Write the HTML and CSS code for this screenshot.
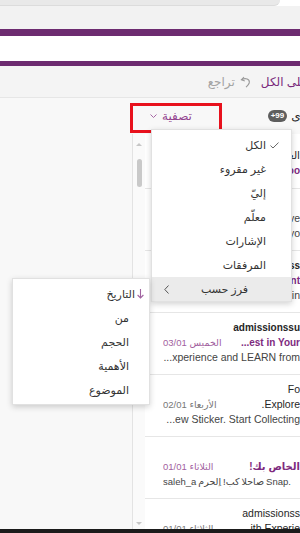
FILE: index.html
```html
<!DOCTYPE html>
<html lang="ar">
<head>
  <meta charset="UTF-8" />
  <meta name="viewport" content="width=device-width, initial-scale=1" />
  <title>البريد الوارد</title>
  <link rel="stylesheet" href="styles.css">
</head>
<body>
  <div class="app">
    <div class="top-edge"><div class="search-edge"></div></div>
    <div class="band"></div>
    <div class="bar bar-thick"></div>
    <div class="blank"></div>
    <div class="bar bar-thin"></div>

    <div class="toolbar" dir="rtl">
      <span class="tool-main">على الكل</span>
      <span class="tool-undo">
        <svg width="11" height="12" viewBox="0 0 11 12"><path d="M4 1 L1.4 3.8 L4.8 5" fill="none" stroke="#999" stroke-width="1.1"/><path d="M1.6 3.8 C5.4 1.4 10.2 3.2 9.2 7 C8.7 8.7 7.5 9.8 6 11.2" fill="none" stroke="#999" stroke-width="1.1"/></svg>
        <span>تراجع</span>
      </span>
    </div>

    <div class="main">
      <div class="folders"></div>
      <div class="pane">
        <div class="list-head" dir="rtl">
          <div class="tab">أخرى <span class="badge" dir="ltr">+99</span></div>
          <div class="filter">تصفية
            <svg width="7" height="4" viewBox="0 0 7 4"><path d="M0.5 0.5 L3.5 3.5 L6.5 0.5" fill="none" stroke="#a767a4" stroke-width="1"/></svg>
          </div>
        </div>
        <div class="list-body">
          <div class="scroll">
            <span class="arrow-up"></span>
            <span class="thumb"></span>
            <span class="arrow-down"></span>
          </div>
          <div class="rows">
            <div class="row first" dir="rtl">
              <div class="line from">العـ</div>
              <div class="line subj unread">poo</div>
            </div>
            <div class="row" dir="rtl">
              <div class="line from">&nbsp;</div>
              <div class="line prev"><span dir="ltr">ctive</span></div>
              <div class="line prev"><span dir="ltr">t yo</span></div>
            </div>
            <div class="row" dir="rtl">
              <div class="line from unread">ss</div>
              <div class="line subj unread"><span dir="ltr">ent</span></div>
              <div class="line prev"><span dir="ltr">in</span></div>
            </div>
            <div class="row" dir="rtl">
              <div class="line from unread">admissionssu</div>
              <div class="line subj unread"><span dir="ltr">...est in Your</span><span class="date">الخميس 03/01</span></div>
              <div class="line prev"><span dir="ltr">...xperience and LEARN from</span></div>
            </div>
            <div class="row" dir="rtl">
              <div class="line from">Fo</div>
              <div class="line subj">Explore.<span class="date">الأربعاء 02/01</span></div>
              <div class="line prev"><span dir="ltr">...ew Sticker. Start Collecting</span></div>
            </div>
            <div class="row" dir="rtl">
              <div class="line from">&nbsp;</div>
              <div class="line subj unread">الخاص بك!<span class="date">الثلاثاء 01/01</span></div>
              <div class="line prev mixed">
                <span class="words" dir="ltr"><span>saleh_a</span><span>اِلحرم</span><span>!كب</span><span>صاحلا</span><span>Snap.</span></span>
              </div>
            </div>
            <div class="row" dir="rtl">
              <div class="line from">admissionss</div>
              <div class="line subj"><span dir="ltr">ith Experie</span><span class="date">الثلاثاء 01/01</span></div>
            </div>
          </div>
        </div>
      </div>
    </div>
    <div class="taskbar"></div>
  </div>

  <div class="annot"></div>

  <div class="menu filter-menu" dir="rtl">
    <div class="item">
      <svg class="mark" width="9" height="7" viewBox="0 0 9 7"><path d="M0.5 3.6 L3 6 L8.5 0.6" fill="none" stroke="#666" stroke-width="1"/></svg>
      <span>الكل</span>
    </div>
    <div class="item"><span class="mark"></span><span>غير مقروء</span></div>
    <div class="item"><span class="mark"></span><span>إليّ</span></div>
    <div class="item"><span class="mark"></span><span>معلّم</span></div>
    <div class="item"><span class="mark"></span><span>الإشارات</span></div>
    <div class="item"><span class="mark"></span><span>المرفقات</span></div>
    <div class="item sub">
      <span>فرز حسب</span>
      <svg width="5" height="9" viewBox="0 0 5 9"><path d="M4.5 0.5 L0.8 4.5 L4.5 8.5" fill="none" stroke="#555" stroke-width="1"/></svg>
    </div>
  </div>

  <div class="menu sort-menu" dir="rtl">
    <div class="sort-item current">
      <svg width="7" height="10" viewBox="0 0 7 10"><path d="M3.5 0 V9 M0.6 6 L3.5 9 L6.4 6" fill="none" stroke="#a063a0" stroke-width="1.1"/></svg>
      <span>التاريخ</span>
    </div>
    <div class="sort-item">من</div>
    <div class="sort-item">الحجم</div>
    <div class="sort-item">الأهمية</div>
    <div class="sort-item">الموضوع</div>
  </div>
</body>
</html>
```

FILE: styles.css
```css
body {
  margin: 0;
  width: 300px;
  height: 533px;
  overflow: hidden;
  position: relative;
  background: #fff;
  color: #262626;
  font-family: "Liberation Sans", "DejaVu Sans", sans-serif;
}
.app {
  display: flex;
  flex-direction: column;
  height: 533px;
}
.top-edge {
  height: 6px;
  background: #fff;
}
.search-edge {
  width: 280px;
  height: 5px;
  background: #e9e9e9;
  border-bottom: 1px solid #dcdcdc;
  border-radius: 0 0 6px 0;
}
.band {
  height: 23px;
  background: #f2f2f2;
}
.bar {
  background: #6d2b70;
}
.bar-thick {
  height: 7px;
}
.bar-thin {
  height: 5px;
}
.blank {
  height: 25px;
  background: #fff;
}
.toolbar {
  height: 31px;
  margin-right: -8px;
  background: #f4f4f4;
  border-bottom: 1px solid #e6e6e6;
  display: flex;
  align-items: center;
  gap: 10px;
  font-size: 12px;
}
.tool-main {
  color: #7a2a7b;
}
.tool-undo {
  color: #a3a3a3;
  display: flex;
  align-items: center;
  gap: 5px;
}
.main {
  display: flex;
  flex: 1;
  min-height: 0;
}
.folders {
  width: 132px;
  background: #f8f8f8;
}
.pane {
  flex: 1;
  display: flex;
  flex-direction: column;
  background: #f8f8f8;
  min-width: 0;
}
.list-head {
  height: 36px;
  display: flex;
  align-items: center;
  justify-content: space-between;
  padding-left: 18px;
  margin-right: -18px;
  font-size: 12px;
}
.tab {
  display: flex;
  align-items: center;
  gap: 4px;
}
.badge {
  background: #5e5e5e;
  color: #fff;
  font-size: 8px;
  font-weight: bold;
  border-radius: 6px;
  padding: 1px 3px;
  line-height: 10px;
}
.filter {
  color: #93438f;
  display: flex;
  align-items: center;
  gap: 5px;
}
.list-body {
  flex: 1;
  display: flex;
  min-height: 0;
  border-left: 1px solid #e3e3e3;
  background: #fff;
}
.scroll {
  width: 12px;
  background: #fafafa;
  display: flex;
  flex-direction: column;
  align-items: center;
  padding: 9px 0 4px;
}
.arrow-up {
  border-left: 3px solid transparent;
  border-right: 3px solid transparent;
  border-bottom: 3px solid #c6c6c6;
}
.thumb {
  width: 5px;
  height: 28px;
  margin-top: 13px;
  border-radius: 3px;
  background: #c9c9c9;
}
.arrow-down {
  margin-top: auto;
  border-left: 3px solid transparent;
  border-right: 3px solid transparent;
  border-top: 3px solid #c6c6c6;
}
.rows {
  flex: 1;
  overflow: hidden;
}
.row {
  height: 54px;
  padding: 7px 0 0 18px;
  border-bottom: 1px solid #e6e6e6;
}
.row.first {
  height: 40px;
  padding-top: 14px;
}
.line {
  height: 15px;
  line-height: 15px;
  font-size: 10.5px;
  white-space: nowrap;
  overflow: hidden;
  display: flex;
  justify-content: space-between;
}
.from.unread {
  font-weight: bold;
  font-size: 10px;
}
.subj.unread {
  color: #7e2a7e;
  font-weight: bold;
  font-size: 10px;
}
.prev {
  color: #444;
}
.prev.mixed {
  justify-content: flex-end;
}
.words {
  display: flex;
  gap: 2px;
  font-size: 9.5px;
}
.date {
  color: #777;
  font-size: 9.5px;
  font-weight: normal;
}
.subj.unread .date {
  color: #a25fa0;
}
.taskbar {
  height: 4px;
  background: #1b1b1b;
}
.annot {
  position: absolute;
  left: 130px;
  top: 103px;
  width: 86px;
  height: 24px;
  border: 3px solid #e8111d;
}
.menu {
  position: absolute;
  background: #fff;
  border: 1px solid #e1e1e1;
  box-shadow: 0 2px 6px rgba(0, 0, 0, 0.18);
  font-size: 11px;
  color: #333;
}
.filter-menu {
  left: 151px;
  top: 129px;
  width: 139px;
  padding-top: 3px;
}
.item {
  height: 24px;
  display: flex;
  align-items: center;
  gap: 4px;
  padding-right: 12px;
}
.item .mark {
  width: 9px;
  flex: none;
}
.item.sub {
  justify-content: space-between;
  padding-right: 43px;
  padding-left: 12px;
  background: #ebebeb;
}
.sort-menu {
  left: 12px;
  top: 278px;
  width: 136px;
  padding: 3px 0 2px;
}
.sort-item {
  height: 24px;
  display: flex;
  align-items: center;
  padding-right: 20px;
}
.sort-item.current {
  padding-right: 5px;
  gap: 2px;
}
```
